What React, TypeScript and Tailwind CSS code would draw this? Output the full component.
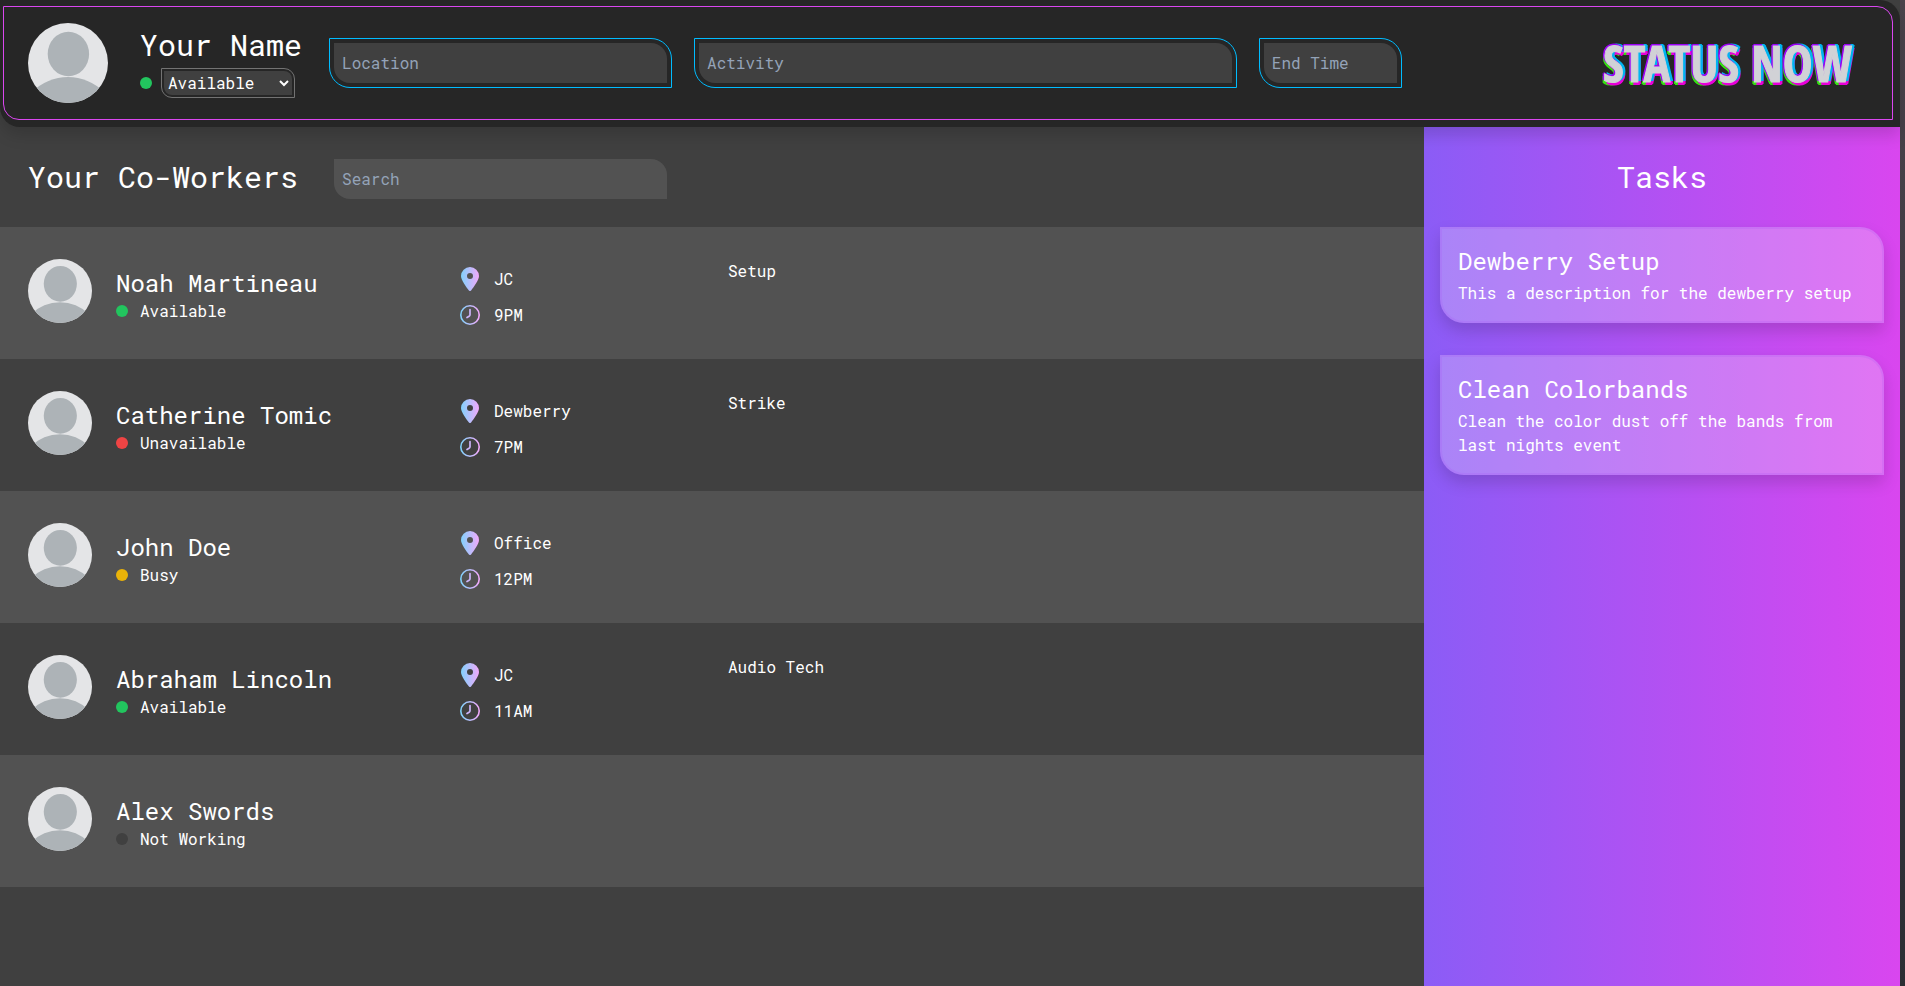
import { useId, useState } from "react";

type Coworker = {
  name: string;
  status: string;
  location?: string;
  until?: string;
  activity?: string;
};

const dotColors: Record<string, string> = {
  Available: "bg-[#22c55e]",
  Unavailable: "bg-[#ef4444]",
  Busy: "bg-[#eab308]",
  "Not Working": "bg-[#404040]",
};

const coworkers: Coworker[] = [
  { name: "Noah Martineau", status: "Available", location: "JC", until: "9PM", activity: "Setup" },
  { name: "Catherine Tomic", status: "Unavailable", location: "Dewberry", until: "7PM", activity: "Strike" },
  { name: "John Doe", status: "Busy", location: "Office", until: "12PM" },
  { name: "Abraham Lincoln", status: "Available", location: "JC", until: "11AM", activity: "Audio Tech" },
  { name: "Alex Swords", status: "Not Working" },
];

const tasks = [
  { title: "Dewberry Setup", description: "This a description for the dewberry setup" },
  { title: "Clean Colorbands", description: "Clean the color dust off the bands from last nights event" },
];

function Avatar({ className }: { className: string }) {
  return (
    <svg viewBox="0 0 80 80" className={`shrink-0 rounded-full ${className}`} aria-hidden="true">
      <rect width="80" height="80" fill="#e4e5e7" />
      <ellipse cx="40.4" cy="31" rx="20.7" ry="22.3" fill="#adb3b7" />
      <circle cx="40" cy="105" r="51" fill="#adb3b7" />
    </svg>
  );
}

function StatusDot({ status }: { status: string }) {
  return <span className={`size-3 shrink-0 rounded-full ${dotColors[status]}`} />;
}

function IconGradient({ id }: { id: string }) {
  return (
    <defs>
      <linearGradient id={id} x1="0" y1="0" x2="24" y2="0" gradientUnits="userSpaceOnUse">
        <stop offset="0.1" stopColor="#7dd3fc" />
        <stop offset="0.9" stopColor="#f5a8fb" />
      </linearGradient>
    </defs>
  );
}

function PinIcon() {
  const id = useId();
  return (
    <svg viewBox="0 0 24 24" className="size-6" aria-hidden="true">
      <IconGradient id={id} />
      <path
        fill={`url(#${id})`}
        fillRule="evenodd"
        d="M12 0a9 9 0 0 0-9 9c0 4.1 5.4 11.3 7.9 14.4a1.4 1.4 0 0 0 2.2 0C15.6 20.3 21 13.1 21 9a9 9 0 0 0-9-9Zm0 12a3 3 0 1 1 0-6 3 3 0 0 1 0 6Z"
      />
    </svg>
  );
}

function ClockIcon() {
  const id = useId();
  return (
    <svg viewBox="0 0 24 24" className="size-6" fill="none" aria-hidden="true">
      <IconGradient id={id} />
      <circle cx="12" cy="12" r="9.2" stroke={`url(#${id})`} strokeWidth="1.6" />
      <path d="M12 6.5V11.8q0 1-.9 1.5L9 14.5" stroke="#cdb4fb" strokeWidth="1.7" strokeLinecap="round" />
    </svg>
  );
}

function HeaderField({ label }: { label: string }) {
  return (
    <input
      type="text"
      aria-label={label}
      placeholder={label}
      className="h-10 w-full min-w-0 rounded-tr-2xl rounded-bl-2xl bg-[#404040] px-2 pb-0.5 outline outline-offset-4 outline-[#00bcff] placeholder:text-[#94a3b8]"
    />
  );
}

function Header() {
  const [status, setStatus] = useState("Available");
  return (
    <header className="relative z-10 rounded-tr-[20px] rounded-bl-[20px] bg-[#262626] pt-[6px] pr-[7px] pb-[7px] pl-[3px] shadow-[0_8px_16px_rgba(0,0,0,0.15)]">
      <div className="flex h-[114px] items-center gap-8 rounded-tr-2xl rounded-bl-2xl border border-[#d946ef] pr-10 pl-6">
        <Avatar className="size-20" />
        <div className="shrink-0 pb-1">
          <h2 className="text-3xl/9">Your Name</h2>
          <div className="mt-2 flex items-center gap-3">
            <StatusDot status={status} />
            <select
              aria-label="Status"
              value={status}
              onChange={(e) => setStatus(e.target.value)}
              className="h-6 w-32 rounded-tr-lg rounded-bl-lg bg-[#404040] pb-0.5 outline outline-offset-2 outline-[#737373]"
            >
              {Object.keys(dotColors).map((s) => (
                <option key={s}>{s}</option>
              ))}
            </select>
          </div>
        </div>
        <div className="grid max-w-[1063px] min-w-0 flex-1 grid-cols-[5fr_8fr_2fr] gap-8">
          <HeaderField label="Location" />
          <HeaderField label="Activity" />
          <HeaderField label="End Time" />
        </div>
        <h1 className="ml-auto shrink-0 font-['Open_Sans_Condensed','Roboto_Condensed',sans-serif] text-[50px]/[56px] font-bold text-[#d1d2d6] [-webkit-text-stroke:1px_#d1d2d6] [text-shadow:-2px_-1px_0_#9a00f5,-1px_-2px_0_#9a00f5,2px_-2px_0_#00b4f0,3px_-1px_0_#00b4f0,3px_2px_0_#e800d8,2px_3px_0_#e800d8,-2px_2px_0_#35e012,-1px_3px_0_#35e012]">
          STATUS NOW
        </h1>
      </div>
    </header>
  );
}

function CoworkerRow({ person }: { person: Coworker }) {
  return (
    <li className="grid min-h-[132px] grid-cols-[430px_270px_1fr] py-8 pl-7 odd:bg-[#525252]">
      <div className="flex h-16 items-end gap-6">
        <Avatar className="size-16" />
        <div>
          <h3 className="text-2xl/8">{person.name}</h3>
          <p className="flex items-center gap-3">
            <StatusDot status={person.status} />
            {person.status}
          </p>
        </div>
      </div>
      <div className="flex flex-col gap-3 pt-2">
        {person.location && (
          <p className="flex items-center gap-3">
            <PinIcon />
            {person.location}
          </p>
        )}
        {person.until && (
          <p className="flex items-center gap-3">
            <ClockIcon />
            {person.until}
          </p>
        )}
      </div>
      <p>{person.activity}</p>
    </li>
  );
}

export default function App() {
  return (
    <div className="flex min-h-screen bg-[#404040] font-['Roboto_Mono','Liberation_Mono',monospace] text-base/6 text-white">
      <div className="flex min-w-0 flex-1 flex-col">
        <Header />
        <div className="flex flex-1">
          <main className="min-w-0 flex-1">
            <div className="flex items-start gap-9 pt-8 pb-7 pl-7">
              <h2 className="text-3xl/9">Your Co-Workers</h2>
              <input
                type="search"
                aria-label="Search"
                placeholder="Search"
                className="h-10 w-[333px] rounded-tr-2xl rounded-bl-2xl bg-[#525252] px-2 pb-0.5 placeholder:text-[#94a3b8]"
              />
            </div>
            <ul>
              {coworkers.map((person) => (
                <CoworkerRow key={person.name} person={person} />
              ))}
            </ul>
          </main>
          <aside className="w-[476px] shrink-0 bg-linear-to-r/srgb from-[#8b5cf6] to-[#d946ef] px-4 pt-8">
            <h2 className="text-center text-3xl/9">Tasks</h2>
            <ul className="mt-8 flex flex-col gap-8">
              {tasks.map((task) => (
                <li
                  key={task.title}
                  className="rounded-tr-3xl rounded-bl-3xl border-2 border-[#a855f7]/20 bg-white/25 p-4 shadow-[0_8px_16px_rgba(0,0,0,0.15)]"
                >
                  <h3 className="text-2xl/8">{task.title}</h3>
                  <p className="mt-1">{task.description}</p>
                </li>
              ))}
            </ul>
          </aside>
        </div>
      </div>
      <div className="w-[5px] shrink-0 bg-linear-to-b from-[#4b444c] to-[#2b2e33]" />
    </div>
  );
}
